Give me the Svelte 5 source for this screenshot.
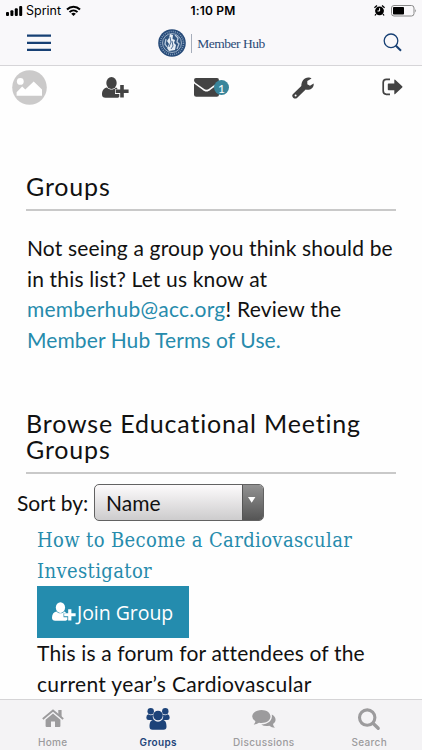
<script>
	const tabs = [
		{ id: 'home', label: 'Home' },
		{ id: 'groups', label: 'Groups' },
		{ id: 'discussions', label: 'Discussions' },
		{ id: 'search', label: 'Search' }
	]

	let active = $state('groups')
</script>

{#snippet userPlus(width, height)}
	<svg {width} {height} viewBox="0 0 27 22" fill="currentColor">
		<ellipse cx="9.5" cy="6" rx="5.2" ry="6" />
		<path d="M5 10.4C1.7 10.9 0 13.5 0 17.5 0 19.6 1.3 20.8 3.5 20.8H15.2C16.2 20.8 17 20.3 17.3 19.5V17H13V12.3H15.8C15.2 11.2 14.7 10.7 14 10.4 11.5 13.2 7.5 13.2 5 10.4Z" />
		<path d="M18.2 8H21.8V12.4H26.6V15.9H21.8V20.5H18.2V15.9H13.7V12.4H18.2Z" />
	</svg>
{/snippet}

<div class="app">
	<header>
		<div class="status">
			<div class="carrier">
				<svg width="17" height="12" viewBox="0 0 17 12">
					<rect x="0" y="7" width="3" height="4" rx="1" />
					<rect x="4.4" y="5.3" width="3" height="5.7" rx="1" />
					<rect x="8.8" y="3.2" width="3" height="7.8" rx="1" />
					<rect x="13.2" y="1" width="3" height="10" rx="1" />
				</svg>
				<span>Sprint</span>
				<svg width="15" height="12" viewBox="0 0 15 12" fill="none" stroke="#000" stroke-width="2">
					<path d="M1 4.5C4.7 .7 10.3 .7 14 4.5M3.5 7.1C5.8 4.8 9.2 4.8 11.5 7.1" />
					<path d="M5.2 8.7Q7.5 6.9 9.8 8.7L7.5 11Z" fill="#000" stroke="none" />
				</svg>
			</div>
			<b>1:10 PM</b>
			<div class="power">
				<svg width="11" height="11" viewBox="0 0 11 11">
					<circle cx="5.5" cy="5.8" r="4.4" />
					<path d="M.4 2.7L3 .5M10.6 2.7L8 .5M2 9L1 10.5M9 9L10 10.5" stroke="#000" stroke-width="1.3" />
					<path d="M5.6 3.2V6H3.5" stroke="#fff" fill="none" />
				</svg>
				<svg width="26" height="12" viewBox="0 0 26 12">
					<rect x=".5" y=".5" width="22.5" height="10.5" rx="2.5" fill="none" stroke="#888" />
					<rect x="2" y="2" width="11" height="7.5" rx=".8" />
					<path d="M24.2 4Q26 5.8 24.2 7.6Z" fill="#888" />
				</svg>
			</div>
		</div>
		<div class="nav">
			<svg width="24" height="18" viewBox="0 0 24 18" stroke="#174074" stroke-width="2.3">
				<path d="M0 1.7H24M0 8.8H24M0 15.8H24" />
			</svg>
			<div class="brand">
				<svg width="28" height="28" viewBox="0 0 28 28">
					<circle cx="14" cy="14" r="13.8" fill="#264a78" />
					<circle cx="14" cy="14" r="11.5" fill="none" stroke="#819bb9" stroke-width="1.6" stroke-dasharray="1 1.1" />
					<circle cx="14" cy="14" r="9.5" fill="#315580" stroke="#c9d5e2" stroke-width=".7" />
					<path d="M12 5L15 6 14.5 10 17 11 16 14 18 16 17 21 11 22 9 19 11 15 9 12 11 9Z" fill="#e6edf4" />
					<path d="M17 6L20 9 19 13 21 15 19 20M8 10L7 15 9 18" fill="none" stroke="#b8c9db" stroke-width="1.3" />
					<path d="M12 8L13 13 11 18M14 12L15 17 13 20" fill="none" stroke="#3c6089" stroke-width=".9" />
				</svg>
				<span>Member Hub</span>
			</div>
			<svg width="20" height="20" viewBox="0 0 20 20" fill="none" stroke="#174074">
				<circle cx="8" cy="7.8" r="6.8" stroke-width="1.3" />
				<path d="M12.7 12.5L18 17.7" stroke-width="2" />
			</svg>
		</div>
	</header>

	<div class="toolbar">
		<svg width="35" height="35" viewBox="0 0 35 35">
			<circle cx="17.5" cy="17.5" r="17.3" fill="#cbcaca" />
			<circle cx="8.3" cy="11.4" r="3.4" fill="#fff" />
			<path d="M4.6 25.8V22.2L10.2 16.5 13.3 19.4 21.7 11.5 30 19.5V25.8Z" fill="#fff" />
		</svg>
		{@render userPlus(27, 22)}
		<div class="mail">
			<svg width="25" height="19" viewBox="0 0 25 19" fill="currentColor">
				<path d="M2 0H23Q25 0 25 2.4C24 5 20.5 6.8 15.5 10.4 13.3 12.2 11.7 12.2 9.5 10.4L1.3 4.7Q0 3.5 0 2 0 0 2 0Z" />
				<path d="M0 5.6L8.2 11.5C11.2 14.2 13.8 14.2 16.8 11.5L25 5.6V16.7Q25 18.8 22.8 18.8H2.2Q0 18.8 0 16.7Z" />
			</svg>
			<span class="badge">1</span>
		</div>
		<svg width="22" height="22" viewBox="0 0 22 22" fill="currentColor">
			<path fill-rule="evenodd" d="M9.3 9.1C9.4 4.5 12 .5 16.3 .5 17.6 .5 18.8 .9 19.5 1.5L15.3 4V7.2L18 8.8 21.6 6.4C22.4 10.3 18.5 13.7 13.7 12.6L5 20.9C2.7 23.1-1.3 19.7 .8 17.2ZM3.6 17.5A1 1 0 1 0 3.6 19.5 1 1 0 1 0 3.6 17.5Z" />
		</svg>
		<svg width="21" height="19" viewBox="0 0 21 19">
			<path d="M8 1.4H4.4Q1.2 1.4 1.2 4.6V13.1Q1.2 16.3 4.4 16.3H8" fill="none" stroke="currentColor" stroke-width="1.7" />
			<path d="M5.8 6.3Q5.8 5.5 6.6 5.5H12.3V2Q12.3 1 13.2 1.8L20.2 8.3Q20.8 8.9 20.2 9.5L13.2 16Q12.3 16.7 12.3 15.7V12.3H6.6Q5.8 12.3 5.8 11.5Z" fill="currentColor" />
		</svg>
	</div>

	<main>
		<section>
			<h2>Groups</h2>
			<p class="intro">
				<span>Not seeing a group you think should be</span>
				<span>in this list? Let us know at</span>
				<span class="wide"><a href="#mail">memberhub@acc.org</a>! Review the</span>
				<span class="tight"><a href="#terms">Member Hub Terms of Use.</a></span>
			</p>
		</section>

		<section class="browse">
			<h2>Browse Educational Meeting<br />Groups</h2>
		</section>

		<div class="sort">
			<span>Sort by:</span>
			<button class="select">
				<span>Name</span>
				<i><svg width="8" height="6" viewBox="0 0 8 6"><path d="M0 0H7.4L3.7 5.8Z" fill="#fff" /></svg></i>
			</button>
		</div>

		<article>
			<h3><a href="#group">How to Become a Cardiovascular<br />Investigator</a></h3>
			<button class="join">{@render userPlus(24, 20)}<span>Join Group</span></button>
			<p>
				<span>This is a forum for attendees of the</span>
				<span class="wider">current year’s Cardiovascular</span>
			</p>
		</article>
	</main>

	<footer>
		{#each tabs as tab}
			<button class="tab" class:active={active === tab.id} onclick={() => (active = tab.id)}>
				<svg width="26" height="24" viewBox="0 0 26 24" fill="currentColor">
					{#if tab.id === 'home'}
						<path d="M2.8 12L13 3.5 23.2 12" fill="none" stroke="currentColor" stroke-width="1.9" />
						<path d="M18.3 3H21.6V10.3L18.3 7.5Z" />
						<path d="M5.6 12.7L13 6.5 20.4 12.7V19Q20.4 20 19.4 20H15V14.5H11V20H6.6Q5.6 20 5.6 19Z" />
					{:else if tab.id === 'groups'}
						<circle cx="5.7" cy="4.2" r="3.2" />
						<circle cx="20.3" cy="4.2" r="3.2" />
						<path d="M3.2 7.3Q5.5 9 8 7.8 7 10.5 8.8 13H3.7Q1.3 13 1.3 10.7 1.3 8 3.2 7.3ZM22.8 7.3Q20.5 9 18 7.8 19 10.5 17.2 13H22.3Q24.7 13 24.7 10.7 24.7 8 22.8 7.3Z" />
						<circle cx="13" cy="8.5" r="4.8" />
						<path d="M8.8 12.8Q13 16.5 17.2 12.8C20.5 13 21.5 16 21.5 19.5Q21.5 22.7 18.5 22.7H7.5Q4.5 22.7 4.5 19.5C4.5 16 5.5 13 8.8 12.8Z" />
					{:else if tab.id === 'discussions'}
						<path d="M10.6 3C15.5 3 19.5 5.8 19.5 9.6S15.5 16 10.6 16Q9.3 16 8 15.7 5.5 17.5 2.7 17.5 4.2 16.3 4.4 14.3 1.2 12.4 1.2 9.6C1.2 5.8 5.7 3 10.6 3Z" />
						<path d="M20.8 7.5C25.7 10.1 25.6 14.8 22 17Q22.2 19.1 23.9 20.7 20.6 20.7 18.3 18.8 13.5 19.8 10.1 17.4C16.5 17.6 22 13.5 20.8 7.5Z" />
					{:else}
						<circle cx="11.2" cy="10.6" r="7.7" fill="none" stroke="currentColor" stroke-width="3.1" />
						<path d="M17 16.3L22.2 21.3" stroke="currentColor" stroke-width="3.3" stroke-linecap="round" />
					{/if}
				</svg>
				<span>{tab.label}</span>
			</button>
		{/each}
	</footer>
</div>

<style>
	:global(body) {
		margin: 0;
	}

	.app {
		display: flex;
		flex-direction: column;
		height: 750px;
		overflow: hidden;
		background: #fefefe;
		color: #111;
		font-family: Lato, "Open Sans", sans-serif;
	}

	svg {
		display: block;
		flex: none;
	}

	button {
		margin: 0;
		padding: 0;
		border: 0;
		background: none;
		color: inherit;
		font: inherit;
		text-align: left;
	}

	a {
		color: #268bac;
		text-decoration: none;
	}

	header {
		flex: none;
		box-sizing: border-box;
		height: 66px;
		background: #f9f8fa;
		border-bottom: 1px solid #d6d5d8;
	}

	.status {
		display: grid;
		grid-template-columns: 1fr auto 1fr;
		align-items: center;
		height: 21px;
		padding: 0 5px 0 6px;
		font: 12.5px Inter, sans-serif;
		color: #000;
	}

	.status b {
		padding-left: 3px;
		font-weight: 600;
		font-size: 12px;
		letter-spacing: .2px;
	}

	.carrier, .power {
		display: flex;
		align-items: center;
		gap: 3px;
	}

	.carrier svg:last-child {
		margin-left: 2px;
	}

	.power {
		justify-content: flex-end;
		gap: 6px;
	}

	.nav {
		display: grid;
		grid-template-columns: 1fr auto 1fr;
		align-items: center;
		height: 44px;
		padding: 0 19px 0 27px;
	}

	.nav > svg:last-child {
		justify-self: end;
	}

	.brand {
		display: flex;
		align-items: center;
		gap: 5px;
		margin-right: 7px;
	}

	.brand span {
		padding-left: 5px;
		border-left: 1px solid #a6adba;
		font: 13.5px/19px "Liberation Serif", serif;
		letter-spacing: -.5px;
		color: #2c4b76;
		white-space: nowrap;
	}

	.toolbar {
		flex: none;
		display: grid;
		grid-template-columns: 90px 92px 98px 90px 1fr;
		align-items: center;
		height: 43px;
		padding-left: 12px;
		color: #434343;
	}

	.mail {
		position: relative;
	}

	.badge {
		position: absolute;
		left: 20px;
		top: 2px;
		width: 15px;
		height: 15px;
		border-radius: 50%;
		background: #39859b;
		color: #fff;
		font-size: 12px;
		line-height: 17px;
		text-align: center;
	}

	main {
		flex: 1;
		min-height: 0;
		overflow: hidden;
	}

	section {
		margin: 0 26px;
	}

	h2 {
		margin: 0;
		padding: 64px 0 10px;
		border-bottom: 2px solid #c9c9c9;
		font-size: 25px;
		font-weight: 400;
		line-height: 26px;
		letter-spacing: .83px;
		white-space: nowrap;
	}

	p {
		margin: 0;
		font-size: 21px;
		line-height: 30.5px;
		letter-spacing: .16px;
		white-space: nowrap;
	}

	p span {
		display: block;
	}

	.tight {
		letter-spacing: .1px;
	}

	.wide {
		letter-spacing: .24px;
	}

	.wider {
		letter-spacing: .34px;
	}

	.intro {
		padding: 22px 1px 0;
	}

	.browse h2 {
		padding: 55px 0 10px;
	}

	.sort {
		display: flex;
		align-items: center;
		gap: 5px;
		height: 37px;
		padding: 10px 0 0 17px;
		font-size: 21px;
		line-height: 24px;
		white-space: nowrap;
	}

	.sort > span {
		width: 72px;
	}

	.select {
		display: flex;
		justify-content: space-between;
		align-items: center;
		box-sizing: border-box;
		width: 170px;
		height: 37px;
		padding-left: 11px;
		border: 1px solid #626262;
		border-radius: 5px;
		background: linear-gradient(#fdfbfc, #cdcccd);
		overflow: hidden;
	}

	.select i {
		display: flex;
		justify-content: center;
		box-sizing: border-box;
		width: 21px;
		height: 100%;
		padding: 12px 2px 0 0;
		border-left: 1px solid #555;
		background: linear-gradient(#929292, #555);
	}

	article {
		padding: 4px 37px 0;
	}

	h3 {
		margin: 0;
		font: 400 20px/30.5px "DejaVu Serif Condensed", "DejaVu Serif", serif;
		letter-spacing: .37px;
		white-space: nowrap;
	}

	.join {
		display: flex;
		align-items: center;
		gap: 1px;
		width: 152px;
		height: 52px;
		padding-left: 15px;
		background: #248cae;
		color: #fff;
		font: 19.5px "Open Sans", sans-serif;
		letter-spacing: -.05px;
		white-space: nowrap;
	}

	footer {
		flex: none;
		display: grid;
		grid-template-columns: repeat(4, 1fr);
		box-sizing: border-box;
		height: 51px;
		border-top: 1px solid #d5d4d6;
		background: #f4f3f5;
	}

	.tab {
		display: flex;
		flex-direction: column;
		align-items: center;
		padding-top: 7px;
		color: #9c9b9d;
		font: 500 10px/14px Inter, sans-serif;
		letter-spacing: .35px;
	}

	.tab span {
		margin-top: 4px;
	}

	.tab.active {
		color: #1d4379;
	}

	.active span {
		font-weight: 600;
	}
</style>
